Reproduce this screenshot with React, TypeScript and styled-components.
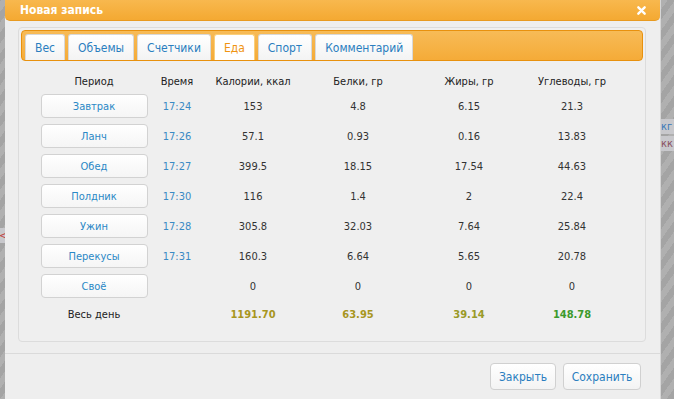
import React from 'react';
import styled, { createGlobalStyle } from 'styled-components';

const GlobalStyle = createGlobalStyle`
  html, body {
    margin: 0;
    padding: 0;
  }
  body {
    width: 674px;
    height: 399px;
    overflow: hidden;
    font-family: "DejaVu Sans Condensed", "DejaVu Sans", Verdana, sans-serif;
    font-size: 11px;
  }
`;

const Page = styled.div`
  position: relative;
  width: 674px;
  height: 399px;
  overflow: hidden;
  background-color: #a9a9a9;
  background-image: repeating-linear-gradient(
    -55deg,
    #a4a4a4 0px,
    #a4a4a4 6px,
    #b0b0b0 6px,
    #b0b0b0 12px
  );
`;

const BehindText = styled.span<{ $top: number; $left: number; $color: string }>`
  position: absolute;
  top: ${(p) => p.$top}px;
  left: ${(p) => p.$left}px;
  color: ${(p) => p.$color};
  font-size: 11px;
  background: #c8c8cc;
  padding: 1px 4px;
`;

const Dialog = styled.div`
  position: absolute;
  left: 5px;
  top: 0;
  width: 655px;
  height: 399px;
  background: #eeeeee;
  border-right: 1px solid #d6d6d6;
  display: flex;
  flex-direction: column;
`;

const TitleBar = styled.div`
  flex: none;
  height: 20px;
  display: flex;
  align-items: center;
  justify-content: space-between;
  padding: 0 14px 0 15px;
  background: linear-gradient(#f8b84e, #f4a932);
  border-bottom: 1px solid #e89a20;
  border-radius: 0 0 5px 5px;
  color: #fff;
  font-weight: bold;
  font-size: 12px;
`;

const Close = styled.svg`
  width: 9px;
  height: 9px;
`;

const Body = styled.div`
  flex: none;
  padding: 6px 14px 11px 13px;
`;

const Panel = styled.div`
  border: 1px solid #dcdcdc;
  border-radius: 4px;
  background: #efefef;
  padding: 2px 2px 14px 2px;
`;

const TabBar = styled.div`
  display: flex;
  gap: 3px;
  padding: 3px 3px 0 3px;
  height: 26px;
  background: linear-gradient(#f7bb57, #f5ab38);
  border: 1px solid #e8910e;
  border-radius: 4px;
`;

const Tab = styled.div<{ $active?: boolean }>`
  display: flex;
  align-items: center;
  padding: 0 9px;
  height: 26px;
  box-sizing: border-box;
  border: 1px solid ${(p) => (p.$active ? '#f9cf7c' : '#d8d8d8')};
  border-bottom: none;
  border-radius: 3px 3px 0 0;
  background: ${(p) => (p.$active ? '#ffffff' : 'linear-gradient(#ffffff, #f3f3f3)')};
  color: ${(p) => (p.$active ? '#f09412' : '#2a7ebf')};
  font-size: 12px;
`;

const Table = styled.div`
  display: grid;
  grid-template-columns: 120px 46px 106px 104px 118px 88px;
  grid-template-rows: 19px repeat(7, 30px) 26px;
  margin: 11px 0 0 13px;
  color: #333;
`;

const HeadCell = styled.div`
  display: flex;
  align-items: center;
  justify-content: center;
  color: #222;
`;

const Cell = styled.div<{ $color?: string; $bold?: boolean }>`
  display: flex;
  align-items: center;
  justify-content: center;
  color: ${(p) => p.$color || '#333'};
  font-weight: ${(p) => (p.$bold ? 'bold' : 'normal')};
`;

const PeriodButton = styled.button`
  width: 107px;
  height: 24px;
  border: 1px solid #d2d2d2;
  border-radius: 4px;
  background: linear-gradient(#ffffff, #f5f5f5);
  color: #2a88c6;
  font-family: inherit;
  font-size: 11px;
  cursor: pointer;
`;

const Footer = styled.div`
  flex: none;
  border-top: 1px solid #dadada;
  display: flex;
  justify-content: flex-end;
  gap: 7px;
  padding: 9px 19px 0 0;
`;

const FooterButton = styled.button<{ $width: number }>`
  width: ${(p) => p.$width}px;
  height: 27px;
  padding: 0;
  border: 1px solid #d0d0d0;
  border-radius: 4px;
  background: linear-gradient(#ffffff, #f3f3f3);
  color: #2a7ebf;
  font-family: inherit;
  font-size: 12px;
  cursor: pointer;
`;

const tabs = ['Вес', 'Объемы', 'Счетчики', 'Еда', 'Спорт', 'Комментарий'];

const meals = [
  { name: 'Завтрак', time: '17:24', kcal: '153', p: '4.8', f: '6.15', c: '21.3' },
  { name: 'Ланч', time: '17:26', kcal: '57.1', p: '0.93', f: '0.16', c: '13.83' },
  { name: 'Обед', time: '17:27', kcal: '399.5', p: '18.15', f: '17.54', c: '44.63' },
  { name: 'Полдник', time: '17:30', kcal: '116', p: '1.4', f: '2', c: '22.4' },
  { name: 'Ужин', time: '17:28', kcal: '305.8', p: '32.03', f: '7.64', c: '25.84' },
  { name: 'Перекусы', time: '17:31', kcal: '160.3', p: '6.64', f: '5.65', c: '20.78' },
  { name: 'Своё', time: '', kcal: '0', p: '0', f: '0', c: '0' },
];

export default function App() {
  return (
    <Page>
      <GlobalStyle />
      <BehindText $top={119} $left={657} $color="#3a78b8">кг</BehindText>
      <BehindText $top={136} $left={657} $color="#8a5060">кк</BehindText>
      <BehindText $top={228} $left={-5} $color="#c04040">&lt;</BehindText>
      <Dialog>
        <TitleBar>
          <span>Новая запись</span>
          <Close viewBox="0 0 10 10">
            <path d="M1.5 1.5 L8.5 8.5 M8.5 1.5 L1.5 8.5" stroke="#fff" strokeWidth="2.6" strokeLinecap="round" />
          </Close>
        </TitleBar>
        <Body>
          <Panel>
            <TabBar>
              {tabs.map((t) => (
                <Tab key={t} $active={t === 'Еда'}>{t}</Tab>
              ))}
            </TabBar>
            <Table>
              <HeadCell>Период</HeadCell>
              <HeadCell>Время</HeadCell>
              <HeadCell>Калории, ккал</HeadCell>
              <HeadCell>Белки, гр</HeadCell>
              <HeadCell>Жиры, гр</HeadCell>
              <HeadCell>Углеводы, гр</HeadCell>
              {meals.map((m) => (
                <React.Fragment key={m.name}>
                  <Cell><PeriodButton>{m.name}</PeriodButton></Cell>
                  <Cell $color="#3a8ac4">{m.time}</Cell>
                  <Cell>{m.kcal}</Cell>
                  <Cell>{m.p}</Cell>
                  <Cell>{m.f}</Cell>
                  <Cell>{m.c}</Cell>
                </React.Fragment>
              ))}
              <Cell $color="#222">Весь день</Cell>
              <Cell />
              <Cell $color="#a8961e" $bold>1191.70</Cell>
              <Cell $color="#a8961e" $bold>63.95</Cell>
              <Cell $color="#9a9a28" $bold>39.14</Cell>
              <Cell $color="#3c9a2c" $bold>148.78</Cell>
            </Table>
          </Panel>
        </Body>
        <Footer>
          <FooterButton $width={66}>Закрыть</FooterButton>
          <FooterButton $width={78}>Сохранить</FooterButton>
        </Footer>
      </Dialog>
    </Page>
  );
}
